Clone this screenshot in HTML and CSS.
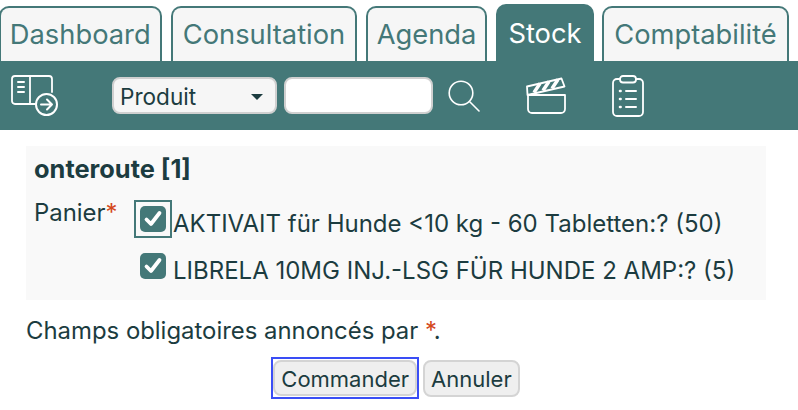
FILE: index.html
```html
<!DOCTYPE html>
<html lang="fr">
<head>
<meta charset="utf-8">
<title>Stock</title>
<link rel="stylesheet" href="styles.css">
</head>
<body>
<nav class="tabs">
  <a class="tab tab-dashboard">Dashboard</a>
  <a class="tab tab-consultation">Consultation</a>
  <a class="tab tab-agenda">Agenda</a>
  <a class="tab tab-active">Stock</a>
  <a class="tab tab-compta">Comptabilité</a>
</nav>
<div class="toolbar">
  <svg class="icon icon-book" width="48" height="42" viewBox="0 0 48 42" fill="none" stroke="#fff" stroke-width="1.800" stroke-linecap="round" stroke-linejoin="round">
    <path d="M24 29H4a3 3 0 0 1-3-3V4a3 3 0 0 1 3-3h34a3 3 0 0 1 3 3v13"/>
    <path d="M19 1v28"/>
    <path d="M7 7h6M7 12h6M7 17h6" stroke-width="2"/>
    <circle cx="35.500" cy="29.500" r="10.500" fill="#447878" stroke-width="2"/>
    <path d="M30 29.500h11M36 24.500l5 5-5 5" stroke-width="2"/>
  </svg>
  <div class="select"><span>Produit</span><i class="caret"></i></div>
  <div class="search-input"></div>
  <svg class="icon icon-search" width="32" height="32" viewBox="0 0 32 32" fill="none" stroke="#fff" stroke-width="1.600" stroke-linecap="round">
    <circle cx="13" cy="13" r="11.800"/>
    <path d="M22 22l9 9"/>
  </svg>
  <svg class="icon icon-clap" width="41" height="37" viewBox="0 0 41 37" fill="none" stroke="#fff" stroke-width="1.800" stroke-linejoin="round">
    <path d="M2 18h37v14a4 4 0 0 1-4 4H6a4 4 0 0 1-4-4z"/>
    <path d="M1 9.500L35.500 1.500l3 8-37 8.500z"/>
    <path d="M8 15.500l6-9M17 13.500l6-9M26 11.500l6-9" stroke-width="3.500"/>
  </svg>
  <svg class="icon icon-clip" width="32" height="42" viewBox="0 0 32 42" fill="none" stroke="#fff" stroke-width="1.800" stroke-linecap="round" stroke-linejoin="round">
    <path d="M8 4H5a4 4 0 0 0-4 4v29a4 4 0 0 0 4 4h22a4 4 0 0 0 4-4V8a4 4 0 0 0-4-4h-3"/>
    <rect x="8" y="1" width="16" height="6.500" rx="3"/>
    <path d="M14 16h10M14 24h10M14 32h10" stroke-width="2"/>
    <path d="M8 16h.6M8 24h.6M8 32h.6" stroke-width="2.600"/>
  </svg>
</div>
<section class="panel">
  <h2 class="panel-title">onteroute [1]</h2>
  <div class="field">
    <div class="field-label">Panier<span class="req">*</span></div>
    <div class="options">
      <div class="option option-focus">
        <span class="check-wrap"><span class="check"><svg width="26" height="26" viewBox="0 0 26 26" fill="none" stroke="#fff" stroke-width="3.800" stroke-linecap="round" stroke-linejoin="round"><path d="M6.500 13.500l4.500 4.500 8.500-11"/></svg></span></span>
        <span class="option-text">AKTIVAIT für Hunde &lt;10 kg - 60 Tabletten:? (50)</span>
      </div>
      <div class="option">
        <span class="check-wrap"><span class="check"><svg width="26" height="26" viewBox="0 0 26 26" fill="none" stroke="#fff" stroke-width="3.800" stroke-linecap="round" stroke-linejoin="round"><path d="M6.500 13.500l4.500 4.500 8.500-11"/></svg></span></span>
        <span class="option-text">LIBRELA 10MG INJ.-LSG FÜR HUNDE 2 AMP:? (5)</span>
      </div>
    </div>
  </div>
</section>
<p class="note">Champs obligatoires annoncés par <span class="req">*</span>.</p>
<div class="actions">
  <span class="focus-ring"><button class="btn" type="button">Commander</button></span>
  <button class="btn" type="button">Annuler</button>
</div>
</body>
</html>
```
FILE: styles.css
```css
* { box-sizing: border-box; }
html, body { margin: 0; height: 410px; overflow: hidden; }
body {
  background: #fff;
  color: #1c3c40;
  font-family: Inter, "Liberation Sans", sans-serif;
  font-size: 23.900px;
}
.tabs {
  display: flex;
  align-items: flex-end;
  gap: 9px;
  height: 61px;
}
.tab {
  display: block;
  flex: none;
  height: 55px;
  padding-top: 11px;
  background: #f6f6f6;
  border: 2px solid #447878;
  border-bottom: 0;
  border-radius: 10px 10px 0 0;
  color: #447878;
  font-size: 27.300px;
  line-height: 32px;
  text-align: center;
  white-space: nowrap;
}
.tab-dashboard { width: 163.500px; margin-left: -1.500px; }
.tab-consultation { width: 186px; }
.tab-agenda { width: 121px; }
.tab-compta { width: 187px; margin-left: -1px; }
.tab-active {
  width: 98px;
  height: 57px;
  padding-top: 12px;
  background: #447878;
  color: #fff;
}
.toolbar {
  display: flex;
  align-items: center;
  height: 69px;
  background: #447878;
  padding-left: 11px;
}
.icon { display: block; flex: none; }
.icon-book { margin-right: 53px; }
.select {
  display: flex;
  align-items: center;
  justify-content: space-between;
  width: 165px;
  height: 37px;
  margin-right: 7px;
  padding: 2px 12px 0 6px;
  background: #f6f6f6;
  border: 2px solid #d0d0d0;
  border-radius: 8px;
  font-size: 22.600px;
}
.caret {
  width: 0;
  height: 0;
  border-left: 6px solid transparent;
  border-right: 6px solid transparent;
  border-top: 6px solid #1c3c40;
}
.search-input {
  width: 149px;
  height: 37px;
  margin-right: 15px;
  background: #fff;
  border: 2px solid #d0d0d0;
  border-radius: 8px;
}
.icon-search { margin-right: 46px; }
.icon-clap { margin-right: 45px; }
.panel {
  width: 740px;
  height: 154px;
  margin: 16px 0 0 26px;
  padding: 9px 8px 0;
  background: #f9f9f9;
}
.panel-title {
  margin: 0;
  font-size: 25.400px;
  font-weight: 700;
  line-height: 28px;
}
.field { display: flex; margin-top: 7px; }
.field-label { width: 100px; padding-top: 7px; line-height: 32px; }
.req { color: #d4481c; }
.options { display: flex; flex-direction: column; gap: 9px; margin-top: 10px; font-size: 24px; }
.option { display: flex; align-items: center; height: 38px; gap: 1px; }
.option-text { margin-top: 9px; }
.check-wrap {
  display: flex;
  align-items: center;
  justify-content: center;
  width: 38px;
  height: 38px;
  border: 2px solid transparent;
}
.option-focus .check-wrap { border-color: #447878; }
.check {
  display: block;
  width: 26px;
  height: 26px;
  border-radius: 5px;
  background: #447878;
}
.check svg { display: block; }
.note { margin: 17px 0 0 26px; line-height: 28px; }
.actions { display: flex; align-items: flex-start; justify-content: center; gap: 4px; margin-top: 12px; padding-right: 7px; }
.focus-ring { display: block; padding: 1px 0 1px 0; border: 2px solid #3a4ef5; }
.btn {
  display: block;
  height: 37px;
  margin-top: 3px;
  padding: 1px 6px 0;
  background: #efefef;
  border: 2px solid #d4d4d4;
  border-radius: 8px;
  color: #1c3c40;
  font-family: Inter, "Liberation Sans", sans-serif;
  font-size: 22px;
}
.focus-ring .btn { height: 36px; margin-top: 0; }
```
